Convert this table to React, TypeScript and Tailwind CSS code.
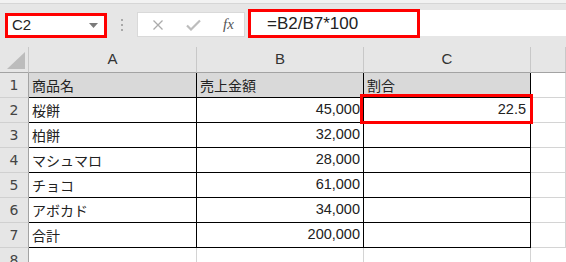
import React from "react";

const rows: { name: string; amount: string; ratio?: string }[] = [
  { name: "桜餅", amount: "45,000", ratio: "22.5" },
  { name: "柏餅", amount: "32,000" },
  { name: "マシュマロ", amount: "28,000" },
  { name: "チョコ", amount: "61,000" },
  { name: "アボカド", amount: "34,000" },
  { name: "合計", amount: "200,000" },
];

const jp = { fontFamily: '"Noto Sans CJK JP", sans-serif' };
const num = { fontFamily: '"Liberation Sans", Arial, sans-serif' };
const rowNum = { fontFamily: '"DejaVu Sans", sans-serif' };

function RowHead({ n }: { n: number }) {
  return (
    <div
      className="h-[25px] bg-[#e6e6e6] border-r border-b border-r-[#a3a3a3] border-b-[#d0d0d0] flex items-center justify-center text-[14px] text-[#444]"
      style={rowNum}
    >
      {n}
    </div>
  );
}

function Toolbar() {
  return (
    <div className="h-[47px] bg-[#e6e6e6] flex flex-col">
      <div className="h-[3px] bg-[#f2f2f2] border-b border-[#d6d6d6] box-content" />
      <div className="flex items-start">
        {/* name box */}
        <div className="ml-[5px] mt-[9px] w-[102px] h-[25px] border-[3px] border-[#ff0000] bg-white flex items-center justify-between pl-[4px] pr-[6px]">
          <span className="text-[15px] text-[#222]" style={num}>
            C2
          </span>
          <svg width="9" height="6" viewBox="0 0 9 6">
            <polygon points="0,0 9,0 4.5,5" fill="#7a7a7a" />
          </svg>
        </div>
        {/* grip dots */}
        <div className="ml-[14px] mt-[15px] flex flex-col gap-[3px]">
          <div className="w-[2px] h-[2px] bg-[#a8a8a8]" />
          <div className="w-[2px] h-[2px] bg-[#a8a8a8]" />
          <div className="w-[2px] h-[2px] bg-[#a8a8a8]" />
        </div>
        {/* cancel / enter / function */}
        <div className="ml-[14px] mt-[8px] w-[108px] h-[25px] bg-white border border-[#d9d9d9] flex items-center">
          <svg width="12" height="12" viewBox="0 0 12 12" className="ml-[14px]">
            <path d="M1.5 1.5 L10.5 10.5 M10.5 1.5 L1.5 10.5" stroke="#ababab" strokeWidth="1.3" />
          </svg>
          <svg width="15" height="12" viewBox="0 0 15 12" className="ml-[22px]">
            <path d="M1 6.5 L5 10.5 L14 1.5" stroke="#bdbdbd" strokeWidth="2.2" fill="none" />
          </svg>
          <span
            className="ml-[22px] text-[15px] italic text-[#555]"
            style={{ fontFamily: '"Liberation Serif", serif' }}
          >
            fx
          </span>
        </div>
        {/* formula input */}
        <div className="ml-[3px] mt-[5px] w-[172px] h-[29px] border-[3px] border-[#ff0000] bg-white flex items-center pl-[16px]">
          <span className="text-[17px] text-[#222]" style={num}>
            =B2/B7*100
          </span>
        </div>
        <div className="flex-1 mt-[6px] h-[26px] bg-white" />
      </div>
    </div>
  );
}

export default function App() {
  const cellBase = "h-[25px] border-r border-b flex items-center";
  return (
    <div className="w-[566px] h-[262px] overflow-hidden bg-white">
      <Toolbar />
      <div className="grid grid-cols-[29px_168px_167px_167px_1fr]">
        {/* column headers */}
        <div className="h-[26px] bg-[#e6e6e6] border-r border-b border-r-[#c8c8c8] border-b-[#a3a3a3] flex items-end justify-end pr-[3px] pb-[3px]">
          <svg width="18" height="17" viewBox="0 0 18 17">
            <polygon points="18,0 18,17 0,17" fill="#bcbcbc" />
          </svg>
        </div>
        {["A", "B", "C", ""].map((c, i) => (
          <div
            key={i}
            className="h-[26px] bg-[#e6e6e6] border-r border-b border-r-[#c8c8c8] border-b-[#a3a3a3] flex items-center justify-center text-[15px] text-[#333]"
            style={num}
          >
            {c}
          </div>
        ))}

        {/* row 1: table heading */}
        <RowHead n={1} />
        <div className={`${cellBase} bg-[#d9d9d9] border-black pl-[3px] text-[14px] text-[#222]`} style={jp}>
          商品名
        </div>
        <div className={`${cellBase} bg-[#d9d9d9] border-black pl-[3px] text-[14px] text-[#222]`} style={jp}>
          売上金額
        </div>
        <div className={`${cellBase} bg-[#d9d9d9] border-black pl-[3px] text-[14px] text-[#222]`} style={jp}>
          割合
        </div>
        <div className={`${cellBase} border-[#d4d4d4]`} />

        {rows.map((r, i) => (
          <React.Fragment key={r.name}>
            <RowHead n={i + 2} />
            <div className={`${cellBase} border-black pl-[3px] text-[14px] text-[#222]`} style={jp}>
              {r.name}
            </div>
            <div className={`${cellBase} border-black justify-end pr-[3px] text-[14.5px] text-[#222]`} style={num}>
              {r.amount}
            </div>
            <div
              className={`${cellBase} border-black justify-end pr-[4px] text-[14.5px] text-[#222] relative`}
              style={num}
            >
              {r.ratio}
              {r.ratio && (
                <div className="absolute left-[-4px] top-[-4px] right-[-3px] bottom-[-2px] border-[3px] border-[#ff0000] z-10" />
              )}
            </div>
            <div className={`${cellBase} border-[#d4d4d4]`} />
          </React.Fragment>
        ))}

        {/* row 8 */}
        <div
          className="h-[25px] bg-[#e6e6e6] border-r border-r-[#a3a3a3] flex items-center justify-center text-[14px] text-[#444]"
          style={rowNum}
        >
          8
        </div>
        <div className="h-[25px] border-r border-[#d4d4d4]" />
        <div className="h-[25px] border-r border-[#d4d4d4]" />
        <div className="h-[25px] border-r border-[#d4d4d4]" />
        <div className="h-[25px]" />
      </div>
    </div>
  );
}
